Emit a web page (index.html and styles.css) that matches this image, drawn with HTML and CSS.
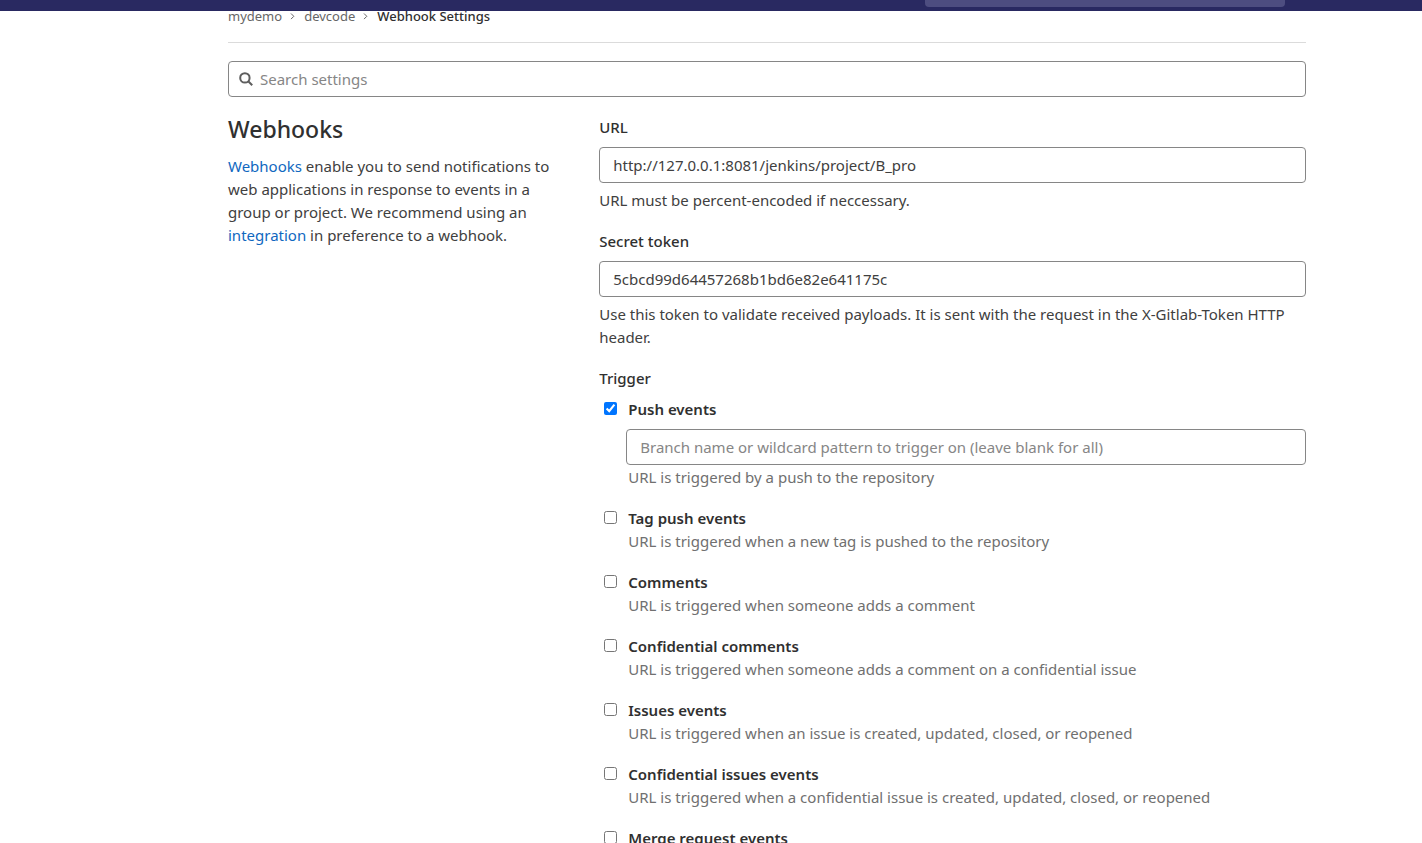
FILE: index.html
```html
<!DOCTYPE html>
<html lang="en">
<head>
<meta charset="utf-8">
<meta name="viewport" content="width=device-width, initial-scale=1">
<title>Webhook Settings</title>
<link rel="stylesheet" href="styles.css">
</head>
<body>
<header class="navbar"><div class="navbar-search"></div></header>
<main class="page">
  <nav class="breadcrumbs" aria-label="Breadcrumbs">
    <a href="#">mydemo</a>
    <svg class="chevron" viewBox="0 0 8 8" aria-hidden="true"><path d="M2 0.5 4.8 3.3 2 6.1"/></svg>
    <a href="#">devcode</a>
    <svg class="chevron" viewBox="0 0 8 8" aria-hidden="true"><path d="M2 0.5 4.8 3.3 2 6.1"/></svg>
    <a class="current" href="#">Webhook Settings</a>
  </nav>
  <div class="search control">
    <svg class="search-icon" viewBox="0 0 14 14" aria-hidden="true"><circle cx="5.9" cy="5.9" r="4.7"/><path d="M9.2 9.2 13.2 13.2"/></svg>
    <input class="search-input" type="search" placeholder="Search settings" aria-label="Search settings">
  </div>
  <div class="columns">
    <section class="intro">
      <h1 class="title">Webhooks</h1>
      <p class="text"><a class="link" href="#">Webhooks</a> enable you to send notifications to web applications in response to events in a group or project. We recommend using an <a class="link" href="#">integration</a> in preference to a webhook.</p>
    </section>
    <form class="form">
      <div class="group">
        <label class="label" for="url">URL</label>
        <input class="control" id="url" type="text" value="http://127.0.0.1:8081/jenkins/project/B_pro">
        <p class="help">URL must be percent-encoded if neccessary.</p>
      </div>
      <div class="group">
        <label class="label" for="token">Secret token</label>
        <input class="control" id="token" type="text" value="5cbcd99d64457268b1bd6e82e641175c">
        <p class="help">Use this token to validate received payloads. It is sent with the request in the X-Gitlab-Token HTTP header.</p>
      </div>
      <fieldset class="triggers">
        <legend class="legend">Trigger</legend>
        <div class="event">
          <input class="check" id="push" type="checkbox" checked>
          <label class="event-name" for="push">Push events</label>
          <input class="control branch" type="text" aria-label="Branch filter" placeholder="Branch name or wildcard pattern to trigger on (leave blank for all)">
          <p class="event-text">URL is triggered by a push to the repository</p>
        </div>
        <div class="event">
          <input class="check" id="tag" type="checkbox">
          <label class="event-name" for="tag">Tag push events</label>
          <p class="event-text">URL is triggered when a new tag is pushed to the repository</p>
        </div>
        <div class="event">
          <input class="check" id="comments" type="checkbox">
          <label class="event-name" for="comments">Comments</label>
          <p class="event-text">URL is triggered when someone adds a comment</p>
        </div>
        <div class="event">
          <input class="check" id="conf-comments" type="checkbox">
          <label class="event-name" for="conf-comments">Confidential comments</label>
          <p class="event-text">URL is triggered when someone adds a comment on a confidential issue</p>
        </div>
        <div class="event">
          <input class="check" id="issues" type="checkbox">
          <label class="event-name" for="issues">Issues events</label>
          <p class="event-text">URL is triggered when an issue is created, updated, closed, or reopened</p>
        </div>
        <div class="event">
          <input class="check" id="conf-issues" type="checkbox">
          <label class="event-name" for="conf-issues">Confidential issues events</label>
          <p class="event-text">URL is triggered when a confidential issue is created, updated, closed, or reopened</p>
        </div>
        <div class="event">
          <input class="check" id="merge" type="checkbox">
          <label class="event-name" for="merge">Merge request events</label>
        </div>
      </fieldset>
    </form>
  </div>
</main>
</body>
</html>
```
FILE: styles.css
```css
* { box-sizing: border-box; }
html { overflow: hidden; }
body {
  margin: 0;
  background: #fff;
  color: #404040;
  font: 15px/23px "Noto Sans", "Open Sans", sans-serif;
}
.navbar {
  position: fixed;
  top: 0;
  left: 0;
  right: 0;
  z-index: 10;
  display: flex;
  justify-content: flex-end;
  padding: 0 137px 4px 0;
  background: #292961;
}
.navbar-search {
  width: 360px;
  height: 7px;
  border-radius: 0 0 4px 4px;
  background: #4d4d80;
}
.page { padding: 0 116px 0 228px; }
.breadcrumbs {
  display: flex;
  align-items: center;
  gap: 7px;
  padding: 5px 0 14px;
  border-bottom: 1px solid #dbdbdb;
  font-size: 13px;
}
.breadcrumbs a { color: #666; text-decoration: none; }
.breadcrumbs .current { color: #303030; font-weight: 500; }
.chevron {
  width: 8px;
  height: 8px;
  fill: none;
  stroke: #666;
  stroke-width: 1;
}
.control {
  display: block;
  width: 100%;
  height: 36px;
  padding: 0 13px;
  border: 1px solid #868686;
  border-radius: 4px;
  background: #fff;
  color: #404040;
  font: inherit;
}
.control::placeholder, .search-input::placeholder { color: #868686; opacity: 1; }
.search {
  display: flex;
  align-items: center;
  gap: 7px;
  margin: 18px 0 16px;
  padding: 0 10px;
}
.search-icon {
  width: 14px;
  height: 14px;
  fill: none;
  stroke: #5e5e5e;
  stroke-width: 2;
}
.search-input {
  flex: 1;
  padding: 0;
  border: 0;
  outline: 0;
  background: none;
  font: inherit;
}
.columns {
  display: grid;
  grid-template-columns: minmax(0, 12fr) minmax(0, 25fr);
  gap: 32px;
}
.form { padding-top: 3px; }
.title {
  margin: 0 0 10px;
  color: #303030;
  font-size: 23px;
  line-height: 32px;
  font-weight: 500;
}
.text { margin: 0; }
.link { color: #1068bf; text-decoration: none; }
.group { margin-bottom: 18px; }
.label, .legend {
  display: block;
  margin-bottom: 8px;
  padding: 0;
  color: #303030;
  font-weight: 500;
}
.help { margin: 6px 0 0; }
.triggers {
  min-width: 0;
  margin: 0;
  padding: 0;
  border: 0;
}
.event {
  display: grid;
  grid-template-columns: 25px minmax(0, 1fr);
  column-gap: 4px;
  margin-bottom: 18px;
}
.check {
  width: 13px;
  height: 13px;
  margin: 4px 0 0 5px;
}
.event-name { color: #303030; font-weight: 600; }
.event-text {
  grid-column: 2;
  margin: 0;
  color: #707070;
}
.branch {
  grid-column: 2;
  width: auto;
  margin: 8px 0 1px -2px;
}
```
